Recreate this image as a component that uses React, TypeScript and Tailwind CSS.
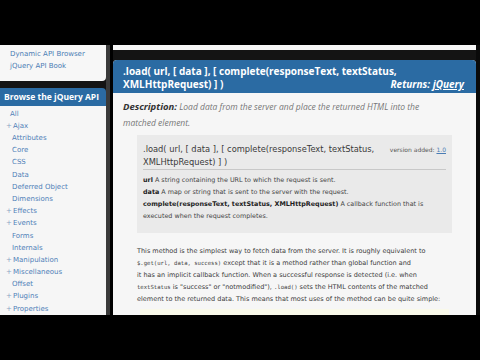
import React from 'react';

const navItems: { label: string; plus?: boolean }[] = [
  { label: 'All' },
  { label: 'Ajax', plus: true },
  { label: 'Attributes' },
  { label: 'Core' },
  { label: 'CSS' },
  { label: 'Data' },
  { label: 'Deferred Object' },
  { label: 'Dimensions' },
  { label: 'Effects', plus: true },
  { label: 'Events', plus: true },
  { label: 'Forms' },
  { label: 'Internals' },
  { label: 'Manipulation', plus: true },
  { label: 'Miscellaneous', plus: true },
  { label: 'Offset' },
  { label: 'Plugins', plus: true },
  { label: 'Properties', plus: true },
];

const args = [
  { name: 'url', text: 'A string containing the URL to which the request is sent.' },
  { name: 'data', text: 'A map or string that is sent to the server with the request.' },
];

function Sidebar() {
  return (
    <aside className="w-[106px] flex flex-col font-['DejaVu_Sans',sans-serif]">
      <div className="h-[37px] bg-[#f7f7f7] rounded-br-[4px] flex flex-col pl-[10px] pt-[3px] text-[7px] leading-[12px] text-[#4a7cb4]">
        <span>Dynamic API Browser</span>
        <span>jQuery API Book</span>
      </div>
      <div className="h-[7px]" />
      <div className="h-[18px] bg-[#2b6ba3] rounded-tr-[4px] flex items-center pl-[4px] font-['Open_Sans',sans-serif] font-bold text-[8.5px] text-white">
        Browse the jQuery API
      </div>
      <ul className="flex-1 bg-[#f6f6f6] pt-[2px] text-[7px] text-[#4f80b8]">
        {navItems.map((item) => (
          <li key={item.label} className="h-[12.2px] flex items-center">
            {item.plus ? (
              <>
                <span className="w-[13px] pl-[6px] text-[#8aa4c4]">+</span>
                <span>{item.label}</span>
              </>
            ) : (
              <span className={item.label === 'All' ? 'pl-[10px]' : 'pl-[12px]'}>{item.label}</span>
            )}
          </li>
        ))}
      </ul>
    </aside>
  );
}

function Signature() {
  return (
    <div className="mx-[24px] mt-[4px] bg-[#eaeaea] px-[6px] pt-[8px] pb-[11px] font-['DejaVu_Sans',sans-serif] whitespace-nowrap">
      <div className="flex items-start justify-between border-b border-[#c8c8c8]">
        <div className="text-[8.3px] leading-[13px] text-[#3a3a3a]">
          .load( url, [ data ], [ complete(responseText, textStatus,
          <br />
          XMLHttpRequest) ] )
        </div>
        <div className="text-[6px] leading-[13px] text-[#555]">
          version added: <span className="text-[#4a7cb4] underline">1.0</span>
        </div>
      </div>
      <div className="pt-[4px] text-[6.4px] leading-[12px] text-[#444]">
        {args.map((a) => (
          <div key={a.name}>
            <span className="font-bold text-[#222]">{a.name}</span> {a.text}
          </div>
        ))}
        <div>
          <span className="font-bold text-[#222]">complete(responseText, textStatus, XMLHttpRequest)</span> A callback function that is
          <br />
          executed when the request completes.
        </div>
      </div>
    </div>
  );
}

function MainPanel() {
  const mono = "font-['DejaVu_Sans_Mono',monospace] text-[5.6px]";
  return (
    <main className="flex-1 flex flex-col">
      <div className="h-[5px] bg-[#f7f7f7]" />
      <div className="h-[10px]" />
      <section className="flex-1 flex flex-col bg-[#f6f6f6] rounded-t-[4px] overflow-hidden">
        <header className="h-[33px] shrink-0 bg-[#2b6ba3] px-[10px] pt-[5px] font-['Open_Sans',sans-serif] font-bold text-white text-[10px] leading-[13px]">
          <div>.load( url, [ data ], [ complete(responseText, textStatus,</div>
          <div className="flex justify-between">
            <span>XMLHttpRequest) ] )</span>
            <span className="italic pr-[2px]">
              Returns: <span className="underline">jQuery</span>
            </span>
          </div>
        </header>
        <div className="px-[10px] pt-[6px] font-['Open_Sans',sans-serif] italic text-[8.5px] leading-[16px] text-[#777] whitespace-nowrap">
          <span className="font-bold text-[#333] text-[9.5px]">Description:</span> Load data from the server and place the returned HTML into the
          <br />
          matched element.
        </div>
        <Signature />
        <p className="mx-[24px] mt-[12px] font-['DejaVu_Sans',sans-serif] text-[6.5px] leading-[12px] text-[#3c3c3c] whitespace-nowrap">
          This method is the simplest way to fetch data from the server. It is roughly equivalent to
          <br />
          <code className={mono}>$.get(url, data, success)</code> except that it is a method rather than global function and
          <br />
          it has an implicit callback function. When a successful response is detected (i.e. when
          <br />
          <code className={mono}>textStatus</code> is "success" or "notmodified"), <code className={mono}>.load()</code> sets the HTML contents of the matched
          <br />
          element to the returned data. This means that most uses of the method can be quite simple:
        </p>
        <div className="mx-[27px] mt-[4px] flex-1 bg-[#f9f9ea]" />
      </section>
    </main>
  );
}

export default function App() {
  return (
    <div className="w-[480px] h-[360px] bg-black flex flex-col overflow-hidden">
      <div className="h-[45px]" />
      <div className="h-[270px] flex bg-[#141414]">
        <Sidebar />
        <div className="w-[4px] bg-[#3a3a3a]" />
        <div className="w-[3px] bg-black" />
        <MainPanel />
        <div className="w-[4px] bg-[#0a0a0a]" />
      </div>
      <div className="flex-1" />
    </div>
  );
}
